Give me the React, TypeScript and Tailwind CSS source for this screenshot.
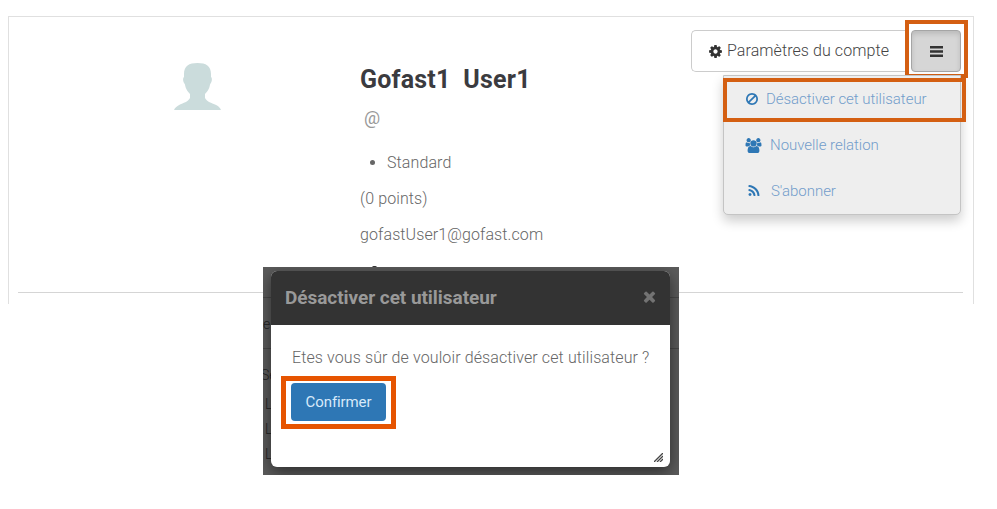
import type { ReactNode } from "react";

const paths = {
  cog: "M1152 896q0-106-75-181t-181-75-181 75-75 181 75 181 181 75 181-75 75-181zm512-109v222q0 12-8 23t-20 13l-185 28q-19 54-39 91 35 50 107 138 10 12 10 25t-9 23q-27 37-99 108t-94 71q-12 0-26-9l-138-108q-44 23-91 38-16 136-29 186-7 28-36 28h-222q-14 0-24.5-8.5t-11.5-21.5l-28-184q-49-16-90-37l-141 107q-10 9-25 9-14 0-25-11-126-114-165-168-7-10-7-23 0-12 8-23 15-21 51-66.5t54-70.5q-27-50-41-99l-183-27q-13-2-21-12.5t-8-23.5v-222q0-12 8-23t19-13l186-28q14-46 39-92-40-57-107-138-10-12-10-24 0-10 9-23 26-36 98.5-107.5t94.5-71.5q13 0 26 10l138 107q44-23 91-38 16-136 29-186 7-28 36-28h222q14 0 24.5 8.5t11.5 21.5l28 184q49 16 90 37l142-107q9-9 24-9 13 0 25 10 129 119 165 170 7 8 7 22 0 12-8 23-15 21-51 66.5t-54 70.5q26 50 41 98l183 28q13 2 21 12.5t8 23.5z",
  ban: "M1440 893q0-161-87-295l-754 753q137 89 297 89 111 0 211.5-43.5t173.5-116.5 116-174.5 43-212.5zm-999 299l755-754q-135-91-300-91-148 0-273 73t-198 199-73 274q0 162 89 299zm1223-299q0 157-61 300t-163.5 246-245 164-298.5 61-298.5-61-245-164-163.5-246-61-300 61-299.5 163.5-245.5 245-164 298.5-61 298.5 61 245 164 163.5 245.5 61 299.5z",
  users: "M593 896q-162 5-265 128h-134q-82 0-138-40.5t-56-118.5q0-353 124-353 6 0 43.5 21t97.5 42.5 119 21.5q67 0 133-23-5 37-5 66 0 139 81 256zm1071 637q0 120-73 189.5t-194 69.5h-874q-121 0-194-69.5t-73-189.5q0-53 3.5-103.5t14-109 26.5-108.5 43-97.5 62-81 85.5-53.5 111.5-20q10 0 43 21.5t73 48 107 48 135 21.5 135-21.5 107-48 73-48 43-21.5q61 0 111.5 20t85.5 53.5 62 81 43 97.5 26.5 108.5 14 109 3.5 103.5zm-1024-1277q0 106-75 181t-181 75-181-75-75-181 75-181 181-75 181 75 75 181zm704 384q0 159-112.5 271.5t-271.5 112.5-271.5-112.5-112.5-271.5 112.5-271.5 271.5-112.5 271.5 112.5 112.5 271.5zm576 225q0 78-56 118.5t-138 40.5h-134q-103-123-265-128 81-117 81-256 0-29-5-66 66 23 133 23 59 0 119-21.5t97.5-42.5 43.5-21q124 0 124 353zm-128-609q0 106-75 181t-181 75-181-75-75-181 75-181 181-75 181 75 75 181z",
  rss: "M576 1344q0 80-56 136t-136 56-136-56-56-136 56-136 136-56 136 56 56 136zm512 123q2 28-17 48-18 21-47 21h-135q-25 0-43-16.5t-20-41.5q-22-229-184.5-391.5t-391.5-184.5q-25-2-41.5-20t-16.5-43v-135q0-29 21-47 17-17 43-17h5q160 13 306 80.5t259 181.5q114 113 181.5 259t80.5 306zm512 2q2 27-18 47-18 20-46 20h-143q-26 0-44.5-17.5t-19.5-42.5q-12-215-101-408.5t-231.5-336-336-231.5-408.5-102q-25-1-42.5-19.5t-17.5-43.5v-143q0-28 20-46 18-18 44-18h3q262 13 501.5 120t425.5 294q187 186 294 425.5t120 501.5z",
  times: "M1490 1322q0 40-28 68l-136 136q-28 28-68 28t-68-28l-294-294-294 294q-28 28-68 28t-68-28l-136-136q-28-28-28-68t28-68l294-294-294-294q-28-28-28-68t28-68l136-136q28-28 68-28t68 28l294 294 294-294q28-28 68-28t68 28l136 136q28 28 28 68t-28 68l-294 294 294 294q28 28 28 68z",
};

function Icon({ name, className, box = "0 0 1792 1792" }: { name: keyof typeof paths; className: string; box?: string }) {
  return (
    <svg viewBox={box} className={`shrink-0 fill-current ${className}`}>
      <path d={paths[name]} />
    </svg>
  );
}

function MenuItem({ icon, children }: { icon: ReactNode; children: ReactNode }) {
  return (
    <li className="flex h-[46px] items-center pl-[21px] text-[#2e77b5]">
      {icon}
      <span className="text-[15px] tracking-[-0.03px] text-[#729dcb]">{children}</span>
    </li>
  );
}

function Avatar() {
  return (
    <svg viewBox="0 0 50 50" className="mt-[44px] size-[50px] shrink-0">
      <path
        d="M11 13C11 5 16 2 24.5 2S38 5 38 13v3c1.500 1 1 5-.8 7-.8 5-3.200 8-5.200 10v4c2 4 7 5 10 6.500 3 1.300 5 3 6 5.500H1c1-2.500 3-4 6-5.500 3-1.500 8-2.500 10-6.500v-4c-2-2-4.400-5-5.200-10-1.800-2-2.300-6-.8-7z"
        fill="#cbdcdc"
      />
    </svg>
  );
}

function Actions() {
  return (
    <div className="ml-auto flex flex-col items-end gap-[3px] pt-[13px] pr-3">
      <div className="flex h-[42px] gap-[3px]">
        <button className="flex w-[217px] items-center gap-1 rounded-l-[5px] border border-r-0 border-[#ccc] bg-white pl-4 text-[16px] tracking-[0.08px] text-[#444]">
          <Icon name="cog" className="size-[15px] text-[#333]" />
          <span className="whitespace-nowrap">Paramètres du compte</span>
        </button>
        <button className="relative flex w-[50px] items-center justify-center rounded-[4px] border border-[#a5a5a5] bg-[#d6d6d6] shadow-[inset_0_3px_5px_rgba(0,0,0,0.125)]">
          <svg viewBox="0 0 13 11" className="h-[11px] w-[13px] fill-[#333]">
            <path d="M0 0h13v2.500H0zM0 4.250h13v2.500H0zM0 8.500h13V11H0z" />
          </svg>
          <span className="absolute -top-[11px] -right-[8px] -bottom-[7px] -left-[7px] border-4 border-[#d45f12]" />
        </button>
      </div>
      <ul className="relative h-[140px] w-[238px] rounded-b-[5px] border border-[#c4c4c4] bg-[#eee] shadow-[0_6px_12px_rgba(0,0,0,0.2)]">
        <MenuItem icon={<Icon name="ban" className="mr-[7px] size-[14px]" />}>Désactiver cet utilisateur</MenuItem>
        <MenuItem icon={<Icon name="users" box="0 0 1920 1792" className="mr-2 h-[15px] w-[17px]" />}>Nouvelle relation</MenuItem>
        <MenuItem icon={<Icon name="rss" className="mr-2.5 ml-0.5 size-[14px]" />}>S&apos;abonner</MenuItem>
        <li className="absolute -right-[6px] -left-[1px] top-[2px] h-[44px] border-4 border-[#d45f12]" />
      </ul>
    </div>
  );
}

function Modal() {
  return (
    <div className="absolute top-[267px] left-[263px] h-[208px] w-[416px] overflow-hidden bg-[#5b5b5b] text-[14px] text-[#222]">
      <div className="flex h-full flex-col">
        <div className="h-[31px] border-b border-[#484848]" />
        <div className="h-[51px] border-b border-[#484848] pt-4">e</div>
        <div className="flex flex-col gap-[4px] pt-4 leading-[21px]">
          <span className="-ml-[2px]">Se</span>
          <span className="pt-1 pl-[2px]">L</span>
          <span className="pl-[2px]">L</span>
          <span className="pl-[2px]">L</span>
        </div>
      </div>
      <section className="absolute top-1 left-2 flex h-[196px] w-[399px] flex-col rounded-[6px] bg-white shadow-[0_5px_15px_rgba(0,0,0,0.5)]">
        <header className="flex h-[54px] items-center justify-between rounded-t-[6px] bg-[#333] pr-3 pl-[14px] text-[#999]">
          <h2 className="text-[19px] leading-[24px] font-bold tracking-[-0.05px]">Désactiver cet utilisateur</h2>
          <Icon name="times" className="-mt-1 size-[17px] text-[#737373]" />
        </header>
        <div className="flex flex-col items-start gap-[14px] pt-[22px] pl-[20px]">
          <p className="ml-px text-[16px] leading-[22px] tracking-[0.11px] whitespace-nowrap text-[#666]">Etes vous sûr de vouloir désactiver cet utilisateur ?</p>
          <button className="relative flex h-[38px] w-[95px] items-center justify-center rounded-[4px] bg-[#2e77b5] text-[15px] font-normal tracking-[-0.1px] text-[#d8eafa]">
            Confirmer
            <span className="absolute -top-[7px] -right-[10px] -bottom-[8px] -left-[10px] border-[5px] border-[#e65400]" />
          </button>
        </div>
        <svg viewBox="0 0 9 9" className="mt-auto mr-[7px] mb-[5px] size-[9px] self-end stroke-[#444]">
          <path d="M0 9L9 0M3 9L9 3M6 9L9 6" strokeWidth="1.300" />
        </svg>
      </section>
    </div>
  );
}

export default function App() {
  return (
    <main className="relative h-[509px] w-[997px] overflow-hidden bg-white pt-4 pl-2 font-['Roboto',sans-serif] font-light">
      <section className="flex h-[288px] w-[966px] flex-col border border-b-0 border-[#e0e0e0]">
        <div className="flex h-[275px] pl-[164px]">
          <Avatar />
          <div className="flex flex-col pt-[48px] pl-[137px] text-[16px] text-[#666]">
            <h1 className="text-[25px] leading-[30px] font-bold tracking-[0.2px] whitespace-pre text-[#3b3b3f]">Gofast1  User1</h1>
            <p className="mt-[10px] ml-1 text-[18px] leading-[26px] font-normal text-[#999]">@</p>
            <ul className="mt-[19px] ml-[27px] list-disc leading-[26px] tracking-[0.1px]"><li>Standard</li></ul>
            <p className="mt-[10px] leading-[26px] tracking-[0.1px]">(0 points)</p>
            <p className="mt-[10px] leading-[26px] tracking-[0.1px]">gofastUser1@gofast.com</p>
            <i className="mt-[18px] ml-[12px] h-[3px] w-[5px] shrink-0 rounded-full bg-[#333]" />
          </div>
          <Actions />
        </div>
        <hr className="mr-[10px] ml-[9px] border-[#d5d5d5]" />
      </section>
      <Modal />
    </main>
  );
}
